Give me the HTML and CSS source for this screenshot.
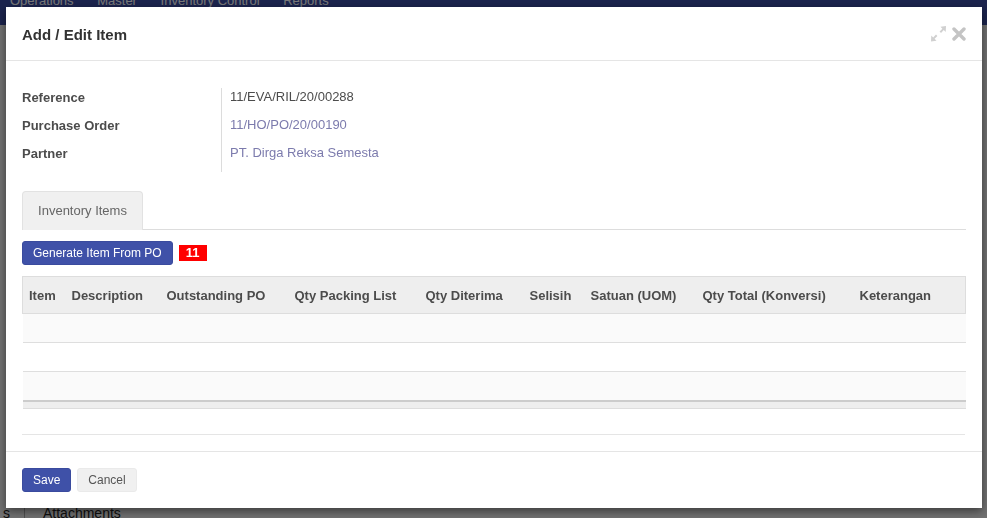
FILE: index.html
```html
<!DOCTYPE html>
<html lang="en">

<head>
    <meta charset="UTF-8">
    <meta name="viewport" content="width=device-width, initial-scale=1.0">
    <title>Add / Edit Item</title>
    <link rel="stylesheet" href="styles.css">
</head>

<body>
    <div class="page">
        <div class="navbar">
            <span class="nav-item">Operations</span>
            <span class="nav-item">Master</span>
            <span class="nav-item">Inventory Control</span>
            <span class="nav-item">Reports</span>
        </div>
        <div class="page-tabs">
            <span class="page-tab-cut">s</span>
            <span class="page-tab">Attachments</span>
        </div>
    </div>

    <div class="backdrop"></div>

    <div class="modal">
        <div class="modal-header">
            <h4 class="modal-title">Add / Edit Item</h4>
            <div class="modal-tools">
                <svg class="tool-icon" width="17" height="16" viewBox="0 0 17 16">
                    <path d="M16 0 L10.5 0.8 L12.4 2.7 L9.6 5.5 L11 6.9 L13.8 4.1 L15.7 6 Z" fill="#d0d0d0" />
                    <path d="M1 15.5 L6.5 14.7 L4.6 12.8 L7.4 10 L6 8.6 L3.2 11.4 L1.3 9.5 Z" fill="#d0d0d0" />
                </svg>
                <svg class="tool-icon" width="14" height="14" viewBox="0 0 14 14">
                    <path d="M2 2 L12 12 M12 2 L2 12" stroke="#c4c4c4" stroke-width="3.4" stroke-linecap="round" />
                </svg>
            </div>
        </div>

        <div class="modal-body">
            <div class="field-group">
                <div class="field-labels">
                    <div class="field-label">Reference</div>
                    <div class="field-label">Purchase Order</div>
                    <div class="field-label">Partner</div>
                </div>
                <div class="field-values">
                    <div class="field-value">11/EVA/RIL/20/00288</div>
                    <div class="field-value link">11/HO/PO/20/00190</div>
                    <div class="field-value link">PT. Dirga Reksa Semesta</div>
                </div>
            </div>

            <div class="tabs">
                <div class="tab active">Inventory Items</div>
            </div>

            <div class="toolbar">
                <button class="btn btn-primary">Generate Item From PO</button>
                <span class="badge">11</span>
            </div>

            <table class="grid">
                <colgroup>
                    <col style="width: 43px">
                    <col style="width: 95px">
                    <col style="width: 128px">
                    <col style="width: 131px">
                    <col style="width: 104px">
                    <col style="width: 61px">
                    <col style="width: 112px">
                    <col style="width: 157px">
                    <col style="width: 112px">
                </colgroup>
                <thead>
                    <tr>
                        <th>Item</th>
                        <th>Description</th>
                        <th>Outstanding PO</th>
                        <th>Qty Packing List</th>
                        <th>Qty Diterima</th>
                        <th>Selisih</th>
                        <th>Satuan (UOM)</th>
                        <th>Qty Total (Konversi)</th>
                        <th>Keterangan</th>
                    </tr>
                </thead>
                <tbody>
                    <tr class="odd"><td colspan="9"></td></tr>
                    <tr><td colspan="9"></td></tr>
                    <tr class="odd"><td colspan="9"></td></tr>
                </tbody>
                <tfoot>
                    <tr><td colspan="9"></td></tr>
                </tfoot>
            </table>
            <div class="grid-after"></div>
        </div>

        <div class="modal-footer">
            <button class="btn btn-primary">Save</button>
            <button class="btn btn-default">Cancel</button>
        </div>
    </div>
</body>

</html>
```

FILE: styles.css
```css
* {
    box-sizing: border-box;
}

html,
body {
    margin: 0;
    height: 100%;
    overflow: hidden;
}

body {
    font-family: 'Liberation Sans', Arial, sans-serif;
    font-size: 13px;
    color: #4c4c4c;
    background: #f0f0f0;
}

.page {
    height: 100%;
}

.navbar {
    height: 46px;
    margin-top: -21px;
    padding: 14px 0 0 10px;
    background: #3b4ca4;
    color: #ffffff;
    font-size: 13px;
    line-height: 16px;
}

.nav-item {
    margin-right: 20px;
}

.page-tabs {
    margin-top: 479px;
    display: flex;
    font-size: 14px;
    line-height: 18px;
    color: #222;
}

.page-tab-cut {
    width: 25px;
    padding-left: 3px;
    border-right: 1px solid #aaa;
}

.page-tab {
    padding-left: 18px;
}

.backdrop {
    position: fixed;
    inset: 0;
    background: rgba(0, 0, 0, 0.53);
}

.modal {
    position: fixed;
    left: 6px;
    top: 7px;
    width: 976px;
    height: 501px;
    background: #ffffff;
    box-shadow: 0 3px 9px rgba(0, 0, 0, 0.5);
    display: flex;
    flex-direction: column;
}

.modal-header {
    height: 54px;
    padding: 0 16px;
    display: flex;
    align-items: center;
    justify-content: space-between;
    border-bottom: 1px solid #e5e5e5;
}

.modal-title {
    margin: 0;
    font-size: 15px;
    font-weight: bold;
    color: #333;
    padding-top: 1px;
}

.modal-tools {
    display: flex;
    align-items: center;
    gap: 5px;
    padding-top: 1px;
}

.modal-body {
    flex: 1;
    padding: 22px 16px 0;
}

.field-group {
    display: flex;
    height: 88px;
}

.field-labels {
    width: 199px;
    padding-top: 1px;
}

.field-label {
    height: 28px;
    line-height: 28px;
    font-weight: bold;
    color: #4c4c4c;
}

.field-values {
    border-left: 1px solid #dcdcdc;
    padding-left: 8px;
    margin-top: 5px;
    height: 84px;
}

.field-value {
    height: 28px;
    line-height: 18px;
    color: #4c4c4c;
}

.field-value.link {
    color: #7c7bad;
}

.tabs {
    margin-top: 20px;
    border-bottom: 1px solid #dddddd;
    display: flex;
}

.tab {
    width: 121px;
    height: 39px;
    line-height: 38px;
    text-align: center;
    color: #666;
    background: #f0f0f0;
    border: 1px solid #e2e2e2;
    border-bottom: none;
    border-radius: 4px 4px 0 0;
    margin-bottom: -1px;
}

.toolbar {
    margin-top: 11px;
    display: flex;
    align-items: center;
    gap: 6px;
    height: 24px;
}

.btn {
    font-family: 'Liberation Sans', Arial, sans-serif;
    font-size: 12px;
    height: 24px;
    padding: 0 10px;
    border: 1px solid transparent;
    border-radius: 3px;
    cursor: pointer;
}

.btn-primary {
    background: #3f51a8;
    border-color: #3a4b9e;
    color: #ffffff;
}

.btn-default {
    background: #f0f0f0;
    border-color: #eaeaea;
    color: #555;
}

.badge {
    display: inline-block;
    width: 28px;
    height: 16px;
    line-height: 16px;
    text-align: center;
    background: #ff0000;
    color: #ffffff;
    font-weight: bold;
    font-size: 13px;
}

.grid {
    margin-top: 11px;
    width: 943px;
    border-collapse: collapse;
    table-layout: fixed;
}

.grid th {
    height: 37px;
    padding: 0 6px;
    text-align: left;
    font-weight: bold;
    color: #4c4c4c;
    white-space: nowrap;
    background: #eeeeee;
    border-top: 1px solid #dddddd;
    border-bottom: 1px solid #dddddd;
}

.grid th:first-child {
    border-left: 1px solid #dddddd;
}

.grid th:last-child {
    border-right: 1px solid #dddddd;
}

.grid tbody td {
    height: 29px;
    padding: 0;
    border-bottom: 1px solid #dedede;
}

.grid tbody tr.odd td {
    background: #fafafa;
}

.grid tfoot td {
    height: 8px;
    padding: 0;
    background: #eeeeee;
    border-top: 2px solid #cccccc;
    border-bottom: 1px solid #dddddd;
}

.grid-after {
    width: 943px;
    height: 26px;
    border-bottom: 1px solid #e5e5e5;
}

.modal-footer {
    height: 57px;
    padding: 16px 16px 0;
    border-top: 1px solid #e5e5e5;
    display: flex;
    gap: 6px;
    align-items: flex-start;
}
```
